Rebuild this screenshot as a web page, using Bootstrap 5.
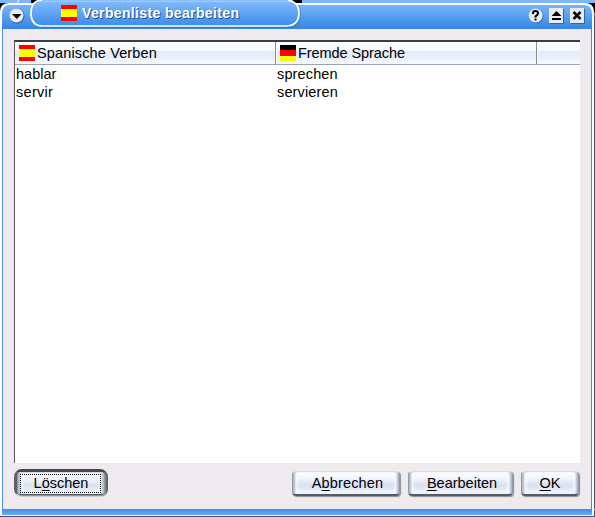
<!DOCTYPE html>
<html lang="de">
<head>
<meta charset="utf-8">
<meta name="viewport" content="width=device-width, initial-scale=1">
<title>Verbenliste bearbeiten</title>
<link href="https://cdn.jsdelivr.net/npm/bootstrap@5.3.0/dist/css/bootstrap.min.css" rel="stylesheet">
<style>
html,body{height:100%}
body{font-family:"Liberation Sans",Arial,sans-serif;font-size:14.5px;line-height:18px;color:#000;overflow:hidden;background:#eeeaee}
.window{width:595px;height:517px;background:#eeeaee}
.titlebar{height:29px;flex:none}
.titlebar>.chrome{position:absolute;left:0;top:0}
.caption{position:relative;margin-left:61px;height:25px;gap:5px;color:#fff;font-weight:700;font-size:14px;letter-spacing:.36px;text-shadow:1px 1px 0 #24528c}
.controls{position:relative;width:58px;height:17px;margin:7px 9px 0 auto}
.frame-body{border-left:2px solid #fff;border-right:1px solid #29599a;min-height:0}
.inner{border-left:1px solid #4a94e8;border-right:1px solid #3c8ae4;margin-right:2px;padding:11px 11px 0 11px;box-shadow:2px 0 #fff}
.listview{height:423px;border-top:2px solid #3c3c44;border-left:1px solid #55555d;background:#fff;width:566px;flex:none}
.head-row{height:23px;background:linear-gradient(#fff 0,#f7f9ff 38%,#e5ebf8 42%,#e7edf9 65%,#f7f9ff 100%);border-bottom:1px solid #9ca7b5}
.head-cell{border-right:1px solid #858f9c;padding-left:4px;gap:2px;box-shadow:1px 0 #fff}
.c1{width:261px}.c2{width:261px;padding-left:4px}
.flag{width:16px;height:16px;flex:none}
.es{background:linear-gradient(#f00 0 4px,#ff0 4px 12px,#f00 12px)}
.de{background:linear-gradient(#000 0 5px,#f00 5px 11px,#ff0 11px)}
.data-row{height:18px}
.data-row .c1{padding-left:1px}.data-row .c2{padding-left:1px}
.s1{letter-spacing:.14px}.s2{letter-spacing:-.07px}.s3{letter-spacing:.14px}.s4{letter-spacing:.3px}
.actions{height:34px;padding-top:8px;gap:8px;width:565px}
.push{height:25px;padding:0;border:1px solid #8f98a7;border-top-color:#d5dae5;border-bottom:2px solid #555c68;border-radius:4px;background:linear-gradient(#fff,#edf1fb 35%,#d8dff0 60%,#f6f9ff);font-size:14.5px;line-height:21px;color:#000;box-shadow:inset 3px 0 2px -1px #aeb8c8,inset -3px 0 2px -1px #aeb8c8,inset 5px 0 2px #fff9,inset -5px 0 2px #fff9,1px 1px 1px #8c8c94}
.push:hover{color:#000}
.push u{text-underline-offset:2px;text-decoration-thickness:1px}
.wide{padding-left:3px}
.default-ring{width:94px;height:28px;margin-top:-2px;border:3px solid #51535d;border-color:#454751 #5f616a #d4d7de #5f616a;border-radius:8px;background:#c5cbd8}
.default-ring .push{display:block;position:relative;width:88px;height:23px;line-height:19px;border-bottom-width:1px}
.default-ring .push::after{content:"";position:absolute;inset:1px 3px 1px 2px;border:1px dotted #000}
.bottombar{height:7px;flex:none;border:solid #fff;border-width:0 2px 1px;background:linear-gradient(#3f8de9,#67acfb);box-shadow:0 1px #29599a,1px 1px #29599a;margin:0 1px 1px 0}
</style>
</head>
<body>
<div class="window d-flex flex-column">
<header class="titlebar d-flex position-relative">
<svg class="chrome" width="595" height="29" viewBox="0 0 595 29" aria-hidden="true">
<defs><linearGradient id="bar" x1="0" y1="0" x2="0" y2="1"><stop stop-color="#78b3f7"/><stop offset=".5" stop-color="#559ff1"/><stop offset="1" stop-color="#3484df"/></linearGradient>
<linearGradient id="tab" x1="0" y1="0" x2="0" y2="1"><stop stop-color="#86bcfa"/><stop offset="1" stop-color="#3a8cec"/></linearGradient></defs>
<path fill="#7db8fa" d="M0 0h595v3H0z"/>
<path fill="#000" d="M0 3h8v8H0zM31 0h8v3h-8zM293 0h9v3h-9zM586 3h9v10h-9z"/>
<path d="M17 3l2-3" stroke="#fff"/>
<path d="M590 8q5 2 5 8v13h-2V14z" fill="#29599a"/>
<path d="M0 29V12q0-9 9-9h576q9 0 9 9v17z" fill="#fff"/>
<path d="M2 29V14q0-9 8-9h574q8 0 8 9v15z" fill="url(#bar)"/>
<path d="M34 5h265q2 4 2 8 0 15-13 15H45Q31 27 31 13q0-5 3-8z" fill="#326eaf" opacity=".5"/>
<path d="M40 .5h249q10 2 10 12 0 13.500-13 13.500H43q-12 0-12-13 0-11 9-13z" fill="url(#tab)" stroke="#fff" stroke-width="1.7"/>
<path d="M42 0h246" stroke="#8ec1fb" stroke-width="2"/>
<circle cx="17" cy="16" r="7.5" fill="#2c62a0"/><circle cx="16.5" cy="15.500" r="7" fill="#e7eaf1"/><path d="M12 14h9.500l-4.700 5z"/>
</svg>
<div class="caption d-flex align-items-center"><span class="flag es"></span><span>Verbenliste bearbeiten</span></div>
<svg class="controls" viewBox="0 0 58 17" aria-hidden="true">
<circle cx="8.200" cy="9" r="7.300" fill="#2b68ab"/><circle cx="7.700" cy="8.500" r="7" fill="#e8ebf2"/>
<path d="M5 7V6q0-2 2.500-2t2.500 2-1.500 2.500l-1 1v1M7.500 11.500v2" fill="none" stroke="#000" stroke-width="2"/>
<path d="M22 2h14v15H22zM43 2h14v15H43z" fill="#2b68ab"/>
<path d="M21 1h14v15H21zM42 1h14v15H42z" fill="#e8ebf2"/>
<path d="M28.500 4l5 5h-10zM24 11h9v2h-9z"/>
<path d="M45.500 5l7 7m0-7l-7 7" stroke="#000" stroke-width="2.500"/>
</svg>
</header>
<main class="frame-body flex-grow-1"><div class="inner h-100">
<section class="listview">
<div class="head-row d-flex"><div class="head-cell c1 d-flex align-items-center"><span class="flag es"></span><span class="s1">Spanische Verben</span></div><div class="head-cell c2 d-flex align-items-center"><span class="flag de"></span><span class="s2">Fremde Sprache</span></div></div>
<div class="data-row d-flex"><span class="c1">hablar</span><span class="c2 s3">sprechen</span></div>
<div class="data-row d-flex"><span class="c1 s4">servir</span><span class="c2 s3">servieren</span></div>
</section>
<div class="actions d-flex">
<div class="default-ring me-auto"><button class="btn push">L<u>ö</u>schen</button></div>
<button class="btn push wide s1" style="width:108px">A<u>b</u>brechen</button>
<button class="btn push wide" style="width:105px"><u>B</u>earbeiten</button>
<button class="btn push" style="width:58px"><u>O</u>K</button>
</div>
</div></main>
<footer class="bottombar"></footer>
</div>
<script src="https://cdn.jsdelivr.net/npm/bootstrap@5.3.0/dist/js/bootstrap.bundle.min.js"></script>
</body>
</html>
